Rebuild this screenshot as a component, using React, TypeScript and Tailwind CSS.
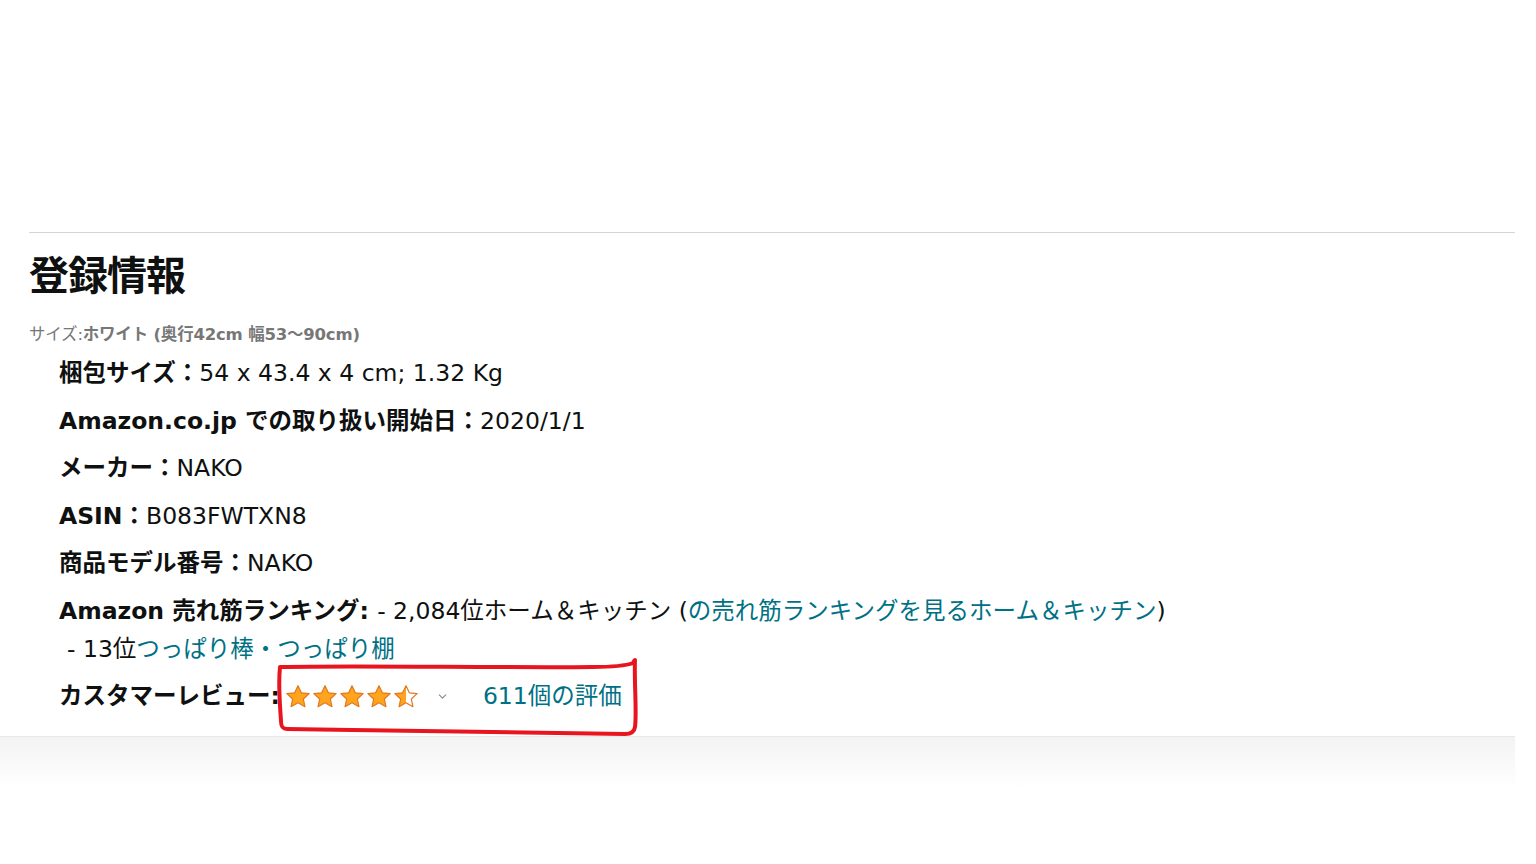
import { ChevronDown } from "lucide-react";

const font = { fontFamily: '"DejaVu Sans", "Noto Sans CJK JP", sans-serif' };

function Star({ fill = "full" }: { fill?: "full" | "half" }) {
  const id = fill === "half" ? "half-star" : "full-star";
  return (
    <svg width="26" height="25" viewBox="0 0 24 23" aria-hidden>
      <defs>
        <linearGradient id={id} x1="0" x2="1" y1="0" y2="0">
          <stop offset={fill === "half" ? "0.5" : "1"} stopColor="#ffa41c" />
          <stop offset={fill === "half" ? "0.5" : "1"} stopColor="#ffffff" />
        </linearGradient>
      </defs>
      <path
        d="M12 1.5l3.1 6.6 7.2.8-5.4 4.9 1.5 7.1L12 17.3l-6.4 3.6 1.5-7.1L1.7 8.9l7.2-.8z"
        fill={`url(#${id})`}
        stroke="#de7921"
        strokeWidth="1.1"
        strokeLinejoin="round"
      />
    </svg>
  );
}

function Row({ label, children }: { label: string; children?: React.ReactNode }) {
  return (
    <li className="mb-[9.5px] leading-[38px]">
      <span className="font-bold">{label}</span>
      {children}
    </li>
  );
}

export default function App() {
  return (
    <div className="min-h-[864px] bg-white text-[#0f1111]" style={font}>
      <div className="h-[232px]" />
      <section className="ml-[29px] mr-[21px] border-t border-[#d5d5d5]">
        <h2 className="mt-[19px] text-[40px] font-bold leading-[48px] tracking-[-1px]">登録情報</h2>
        <p className="mt-[23px] text-[16.5px] leading-[24px] tracking-[-0.2px] text-[#777777]">
          サイズ:<span className="font-bold">ホワイト (奥行42cm 幅53～90cm)</span>
        </p>
        <ul className="ml-[30px] mt-[7px] text-[23.5px]">
          <Row label="梱包サイズ：">54 x 43.4 x 4 cm; 1.32 Kg</Row>
          <Row label="Amazon.co.jp での取り扱い開始日：">2020/1/1</Row>
          <Row label="メーカー：">NAKO</Row>
          <Row label="ASIN：">B083FWTXN8</Row>
          <Row label="商品モデル番号：">NAKO</Row>
          <li className="mb-[9.5px] leading-[38px]">
            <span className="font-bold">Amazon 売れ筋ランキング: </span>- 2,084位ホーム＆キッチン (
            <a className="text-[#007185]">の売れ筋ランキングを見るホーム＆キッチン</a>)
            <ul className="ml-[8px]">
              <li>
                - 13位<a className="text-[#007185]">つっぱり棒・つっぱり棚</a>
              </li>
            </ul>
          </li>
          <li className="relative flex items-center leading-[38px]">
            <span className="font-bold">カスタマーレビュー:</span>
            <span className="ml-[5px] flex items-center gap-[1px]">
              <Star />
              <Star />
              <Star />
              <Star />
              <Star fill="half" />
            </span>
            <ChevronDown className="ml-[17px] h-[13px] w-[13px] text-[#888888]" strokeWidth={2} />
            <a className="ml-[34px] text-[#007185]">611個の評価</a>
            <svg
              className="pointer-events-none absolute left-[214px] top-[-20px]"
              width="370"
              height="84"
              viewBox="0 0 370 84"
              aria-hidden
            >
              <path
                d="M7 10 C 80 8, 220 11, 320 10 C 340 10, 352 9, 360 6 C 361 4, 362 3, 362 3 C 361 25, 364 55, 362 70 Q 361 77, 352 77 C 280 76, 140 74, 14 72 C 9 72, 8 69, 8 64 C 7 48, 5 28, 7 10"
                fill="none"
                stroke="#e8141e"
                strokeWidth="4"
                strokeLinecap="round"
                strokeLinejoin="round"
              />
            </svg>
          </li>
        </ul>
      </section>
      <div className="mr-[21px] mt-[21px] h-[52px] border-t border-[#e9e9e9] bg-gradient-to-b from-[#f3f3f3] via-[#f9f9f9] to-white" />
    </div>
  );
}
